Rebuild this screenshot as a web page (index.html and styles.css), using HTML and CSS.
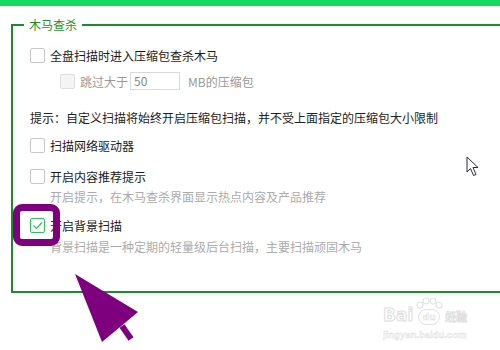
FILE: index.html
```html
<!DOCTYPE html>
<html lang="zh-CN">

<head>
  <meta charset="UTF-8">
  <title>木马查杀设置</title>
  <link rel="stylesheet" href="styles.css">
</head>

<body>
  <div class="top-bar"></div>

  <fieldset class="panel">
    <legend class="panel-title">木马查杀</legend>

    <div class="option">
      <span class="check"></span>
      <span class="label">全盘扫描时进入压缩包查杀木马</span>
    </div>

    <div class="option sub-option">
      <span class="check disabled"></span>
      <span class="label muted">跳过大于</span>
      <span class="size-input">50</span>
      <span class="label muted unit">MB的压缩包</span>
    </div>

    <div class="tip">提示：自定义扫描将始终开启压缩包扫描，并不受上面指定的压缩包大小限制</div>

    <div class="option gap-a">
      <span class="check"></span>
      <span class="label">扫描网络驱动器</span>
    </div>

    <div class="option gap-b">
      <span class="check"></span>
      <span class="label">开启内容推荐提示</span>
    </div>
    <div class="desc">开启提示，在木马查杀界面显示热点内容及产品推荐</div>

    <div class="option gap-c">
      <span class="check checked">
        <svg width="13" height="13" viewBox="0 0 13 13">
          <polyline points="2.5,6.5 5.5,9.5 11,3.5" fill="none" stroke="#2cc456" stroke-width="1.2" />
        </svg>
      </span>
      <span class="label">开启背景扫描</span>
    </div>
    <div class="desc desc-last">背景扫描是一种定期的轻量级后台扫描，主要扫描顽固木马</div>
  </fieldset>

  <!-- annotation overlays -->
  <div class="highlight"></div>

  <svg class="pointer" width="90" height="90" viewBox="0 0 90 90">
    <line x1="62" y1="66" x2="71" y2="79" stroke="#7f007f" stroke-width="6" />
    <polygon points="15,14 78,52 42,82" fill="#7f007f" />
  </svg>

  <svg class="mouse" width="14" height="22" viewBox="0 0 14 22">
    <polygon points="1,1 1,16 4.5,12.5 7.5,19.5 10,18.5 7,11.5 12,11.5" fill="#fff" stroke="#2a2a3a" stroke-width="1" stroke-linejoin="round" />
  </svg>

  <div class="watermark">
    <div class="wm-top">
      <span class="wm-bai">Bai</span>
      <span class="wm-paw">
        <svg class="wm-toes" width="28" height="12" viewBox="0 0 28 12">
          <circle cx="5" cy="8" r="3" fill="none" stroke="#e2e2e2" stroke-width="1.2" />
          <circle cx="11" cy="4" r="3" fill="none" stroke="#e2e2e2" stroke-width="1.2" />
          <circle cx="18" cy="4" r="3" fill="none" stroke="#e2e2e2" stroke-width="1.2" />
          <circle cx="24" cy="8" r="3" fill="none" stroke="#e2e2e2" stroke-width="1.2" />
        </svg>
        <span class="wm-du">du</span>
      </span>
      <span class="wm-jy">经验</span>
    </div>
    <div class="wm-url">jingyan.baidu.com</div>
  </div>
</body>

</html>
```

FILE: styles.css
```css
html,
body {
  margin: 0;
  overflow: hidden;
}

body {
  position: relative;
  width: 500px;
  height: 350px;
  background: #ffffff;
  font-family: "Noto Sans CJK SC", "Noto Sans", sans-serif;
  font-size: 12px;
  color: #1a1a1a;
}

.top-bar {
  height: 6px;
  background-color: #17d860;
}

.panel {
  width: 470px;
  margin: 12px 0 0 11px;
  padding: 16px 0 37px 17px;
  border: 2px solid #1a8c2b;
  border-right: none;
}

.panel-title {
  margin-left: -6px;
  padding: 0 5px;
  line-height: 14px;
  color: #1f8f1f;
}

.option {
  display: flex;
  align-items: center;
  height: 15px;
  line-height: 15px;
}

.check {
  box-sizing: border-box;
  width: 15px;
  height: 15px;
  margin-right: 5px;
  border: 1px solid #c7c7c7;
  border-radius: 2px;
  background: #fff;
  flex-shrink: 0;
}

.check.disabled {
  background: #f4f4f4;
  border-color: #dedede;
}

.check.checked {
  border-color: #2cc456;
  display: flex;
  align-items: center;
  justify-content: center;
}

.sub-option {
  height: 18px;
  margin-top: 9px;
  padding-left: 30px;
}

.muted {
  color: #999;
}

.size-input {
  box-sizing: border-box;
  width: 50px;
  height: 18px;
  margin-left: 2px;
  padding-left: 3px;
  border: 1px solid #d9d9d9;
  line-height: 16px;
  color: #888;
}

.unit {
  margin-left: 8px;
}

.tip {
  margin-top: 20px;
  line-height: 15px;
  color: #222;
}

.gap-a {
  margin-top: 13px;
}

.gap-b {
  margin-top: 16px;
}

.gap-c {
  margin-top: 14px;
}

.desc {
  margin-top: 5px;
  padding-left: 20px;
  line-height: 15px;
  color: #ababab;
}

.desc-last {
  margin-top: 6px;
}

/* annotation overlays */
.highlight {
  position: absolute;
  left: 13px;
  top: 204px;
  width: 33px;
  height: 28px;
  border: 7px solid #7f007f;
  border-radius: 9px;
}

.pointer {
  position: absolute;
  left: 60px;
  top: 260px;
}

.mouse {
  position: absolute;
  left: 466px;
  top: 156px;
}

.watermark {
  position: absolute;
  left: 383px;
  top: 297px;
  color: #fff;
  white-space: nowrap;
  font-family: "DejaVu Sans", sans-serif;
  font-weight: bold;
  -webkit-text-stroke: 1px #dedede;
}

.wm-top {
  display: flex;
  align-items: flex-end;
  height: 28px;
}

.wm-bai {
  font-size: 17px;
  line-height: 20px;
}

.wm-paw {
  display: flex;
  flex-direction: column;
  align-items: center;
  width: 30px;
  margin-left: 1px;
}

.wm-du {
  box-sizing: border-box;
  width: 22px;
  height: 16px;
  border: 1.2px solid #e2e2e2;
  border-radius: 8px;
  font-size: 9px;
  line-height: 14px;
  text-align: center;
  -webkit-text-stroke: 0.6px #dedede;
}

.wm-jy {
  margin-left: 1px;
  font-family: "Noto Sans CJK SC", sans-serif;
  font-size: 11px;
  line-height: 18px;
  -webkit-text-stroke: 0.8px #dedede;
}

.wm-url {
  margin-top: 4px;
  font-family: "Liberation Sans", sans-serif;
  font-size: 9.5px;
  line-height: 12px;
  -webkit-text-stroke: 0.5px #dedede;
}
```
